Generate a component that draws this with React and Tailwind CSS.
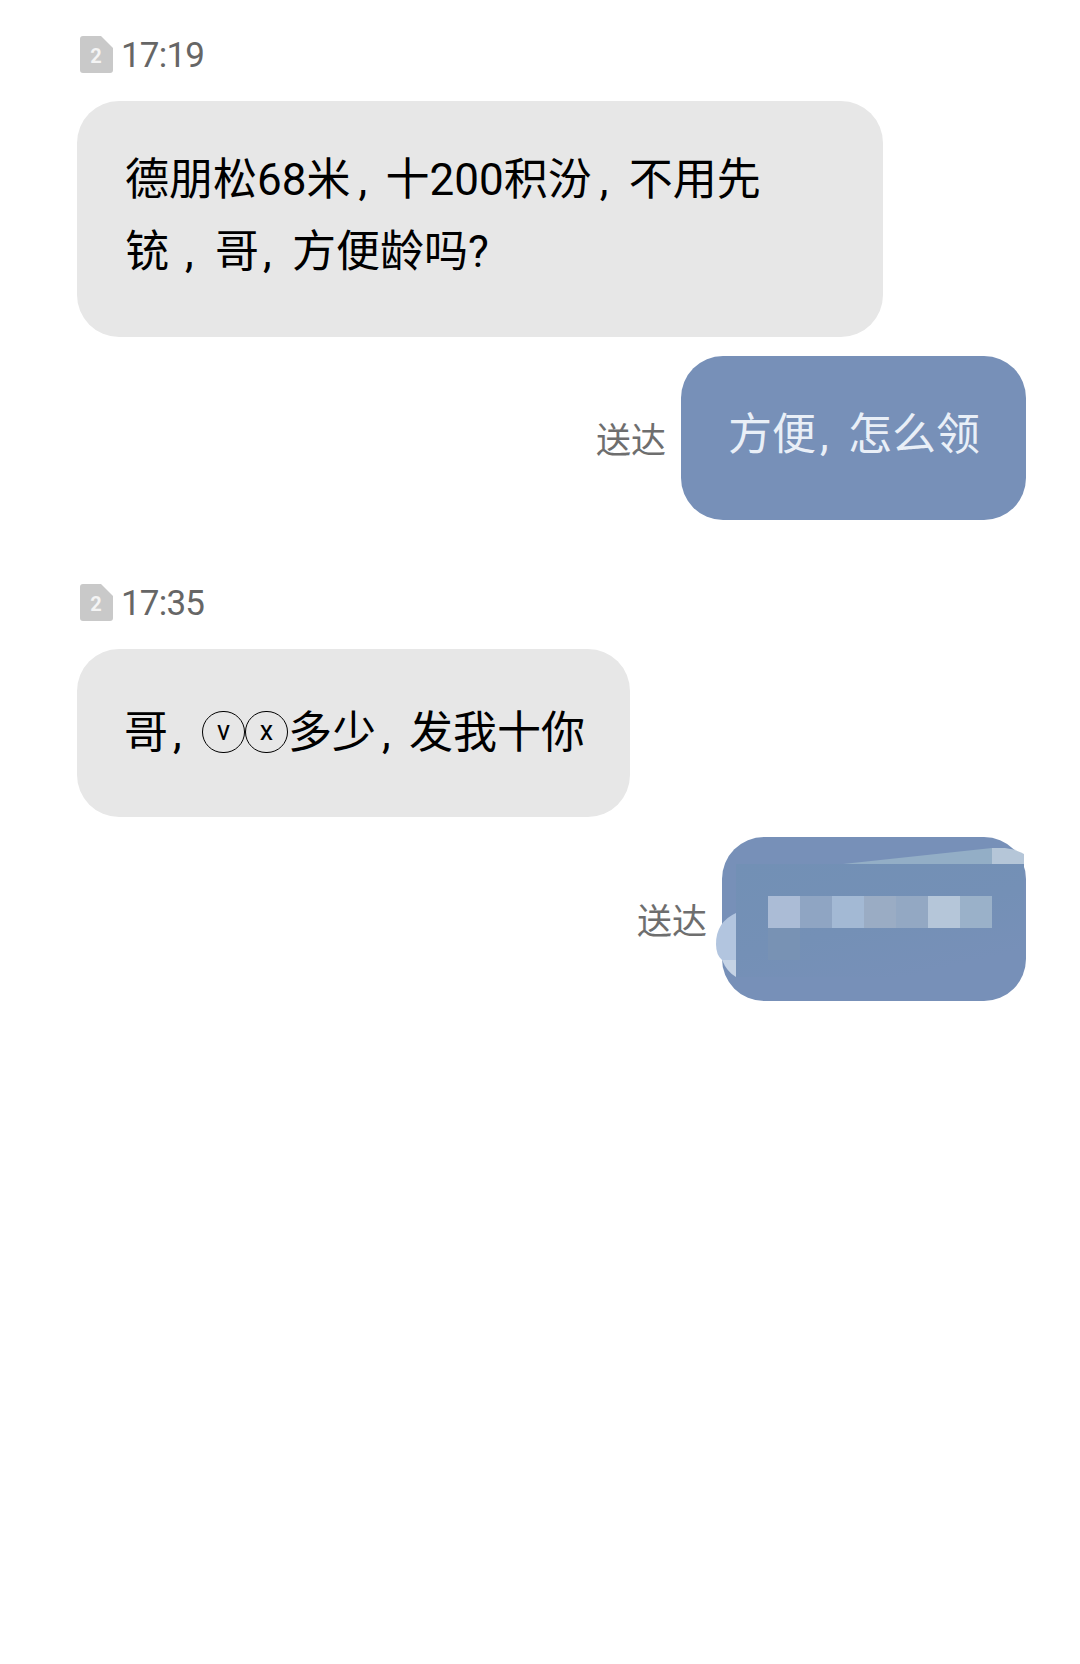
import React from 'react';

const font = "font-['Roboto','Noto_Sans_CJK_SC',sans-serif]";

function Comma({ className }) {
  return <span className={`inline-block ${className}`}>,</span>;
}

function Circled({ children }) {
  return (
    <span className="inline-flex items-center justify-center w-[43px] h-[42px] rounded-full border-[1.5px] border-black text-[27px] leading-none align-[8px]">
      {children}
    </span>
  );
}

function TimeRow({ time }) {
  return (
    <div className="flex items-center h-[37px] pl-[80px] gap-[8px]">
      <svg width="33" height="37" viewBox="0 0 33 37" className="shrink-0">
        <path d="M3 0H21L33 12V34a3 3 0 0 1-3 3H3a3 3 0 0 1-3-3V3a3 3 0 0 1 3-3z" fill="#c9c9c9" />
        <text x="16" y="27" textAnchor="middle" fontSize="20" fontWeight="700" fill="#f4f4f4" fontFamily="Roboto, sans-serif">2</text>
      </svg>
      <span className="text-[35px] leading-[37px] text-[#666666] tracking-[-0.8px] mt-[2px]">{time}</span>
    </div>
  );
}

function Sent({ children, className }) {
  return (
    <div className={`flex justify-end items-center pr-[54px] gap-[15px] ${className}`}>
      <span className="text-[35px] leading-[40px] text-[#6e6e6e] mt-[8px]">送达</span>
      {children}
    </div>
  );
}

export default function App() {
  return (
    <div className={`w-[1080px] min-h-[1664px] bg-white pt-[36px] text-black ${font}`}>
      <TimeRow time="17:19" />

      <div className="ml-[77px] mt-[28px] w-[806px] h-[236px] rounded-[42px] bg-[#e7e7e7] pl-[48px] pt-[43px] text-[44px] leading-[72px]">
        <div>德朋松68米<Comma className="w-[35px] pl-[8px]" />十200积汾<Comma className="w-[37px] pl-[8px]" />不用先</div>
        <div>铳<Comma className="w-[46px] pl-[16px]" />哥<Comma className="w-[33px] pl-[4px]" />方便龄吗?</div>
      </div>

      <Sent className="mt-[19px]">
        <div className="h-[164px] w-[345px] rounded-[42px] bg-[#7790b8] pl-[47px] pt-[43px] text-[44px] leading-[72px] text-[#e9eff7]">
          方便<Comma className="w-[32px] pl-[4px]" />怎么领
        </div>
      </Sent>

      <div className="mt-[64px]">
        <TimeRow time="17:35" />
      </div>

      <div className="ml-[77px] mt-[28px] w-[553px] h-[168px] rounded-[42px] bg-[#e7e7e7] pl-[47px] pt-[48px] text-[44px] leading-[72px] whitespace-nowrap">
        哥<Comma className="w-[34px] pl-[5px]" /><Circled>v</Circled><Circled>x</Circled>多少<Comma className="w-[33px] pl-[6px]" />发我十你
      </div>

      <Sent className="mt-[20px]">
        <div className="relative h-[164px] w-[304px] rounded-[42px] bg-[#7790b8]">
          {/* mosaic over the blurred-out text */}
          <svg width="320" height="163" viewBox="722 837 320 163" className="absolute left-0 top-0 overflow-visible">
            <defs>
              <linearGradient id="patch" x1="0" y1="0" x2="0.6" y2="1">
                <stop offset="0" stopColor="#7290b5" />
                <stop offset="0.6" stopColor="#7490b6" />
                <stop offset="1" stopColor="#7790b8" />
              </linearGradient>
            </defs>
            <path d="M736 864H1024V960Q1020 972 1010 977H736z" fill="url(#patch)" />
            <path d="M843 864L992 848V864z" fill="#93aec6" />
            <path d="M992 848H1005Q1018 850 1024 854V864H992z" fill="#b5c6d8" />
            <rect x="768" y="896" width="32" height="32" fill="#abbcd6" />
            <rect x="800" y="896" width="32" height="32" fill="#8fa5c3" />
            <rect x="832" y="896" width="32" height="32" fill="#a3b9d4" />
            <rect x="864" y="896" width="32" height="32" fill="#9aacc4" />
            <rect x="896" y="896" width="32" height="32" fill="#93a8c3" />
            <rect x="928" y="896" width="32" height="32" fill="#b5c6d9" />
            <rect x="960" y="896" width="32" height="32" fill="#9ab1c9" />
            <rect x="768" y="928" width="32" height="32" fill="#7892b4" />
            <path d="M736 913Q716 922 716 944Q716 955 722 960H736z" fill="#b2c5df" />
            <path d="M722 960Q727 972 736 977V960z" fill="#c5d3e5" />
          </svg>
        </div>
      </Sent>
    </div>
  );
}
